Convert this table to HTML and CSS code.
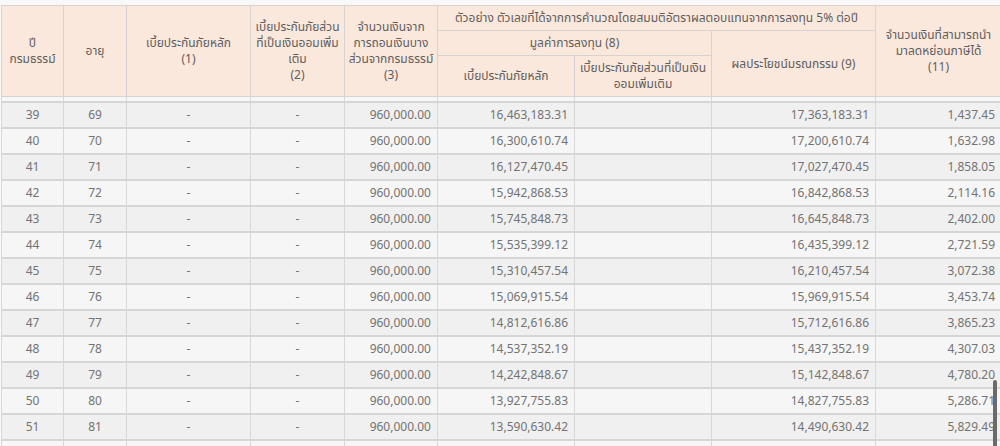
FILE: index.html
```html
<!DOCTYPE html>
<html lang="th">
<head>
<meta charset="utf-8">
<link rel="stylesheet" href="styles.css">
</head>
<body>
<div class="wrap">
<table class="tbl">
<colgroup>
<col class="c1"><col class="c2"><col class="c3"><col class="c4"><col class="c5"><col class="c6"><col class="c7"><col class="c8"><col class="c9">
</colgroup>
<thead>
<tr class="h1">
<th rowspan="3">ปี<br>กรมธรรม์</th>
<th rowspan="3">อายุ</th>
<th rowspan="3">เบี้ยประกันภัยหลัก<br>(1)</th>
<th rowspan="3">เบี้ยประกันภัยส่วน<br>ที่เป็นเงินออมเพิ่ม<br>เติม<br>(2)</th>
<th rowspan="3">จำนวนเงินจาก<br>การถอนเงินบาง<br>ส่วนจากกรมธรรม์<br>(3)</th>
<th colspan="3">ตัวอย่าง ตัวเลขที่ได้จากการคำนวณโดยสมมติอัตราผลตอบแทนจากการลงทุน 5% ต่อปี</th>
<th rowspan="3">จำนวนเงินที่สามารถนำ<br>มาลดหย่อนภาษีได้<br>(11)</th>
</tr>
<tr class="h2">
<th colspan="2">มูลค่าการลงทุน (8)</th>
<th rowspan="2">ผลประโยชน์มรณกรรม (9)</th>
</tr>
<tr class="h3">
<th>เบี้ยประกันภัยหลัก</th>
<th>เบี้ยประกันภัยส่วนที่เป็นเงิน<br>ออมเพิ่มเติม</th>
</tr>
<tr class="gap"><td></td><td></td><td></td><td></td><td></td><td></td><td></td><td></td><td></td></tr>
</thead>
<tbody>
<tr><td class="ct">39</td><td class="ct">69</td><td class="ct">-</td><td class="ct">-</td><td class="rt">960,000.00</td><td class="rt">16,463,183.31</td><td></td><td class="rt">17,363,183.31</td><td class="rt">1,437.45</td></tr>
<tr><td class="ct">40</td><td class="ct">70</td><td class="ct">-</td><td class="ct">-</td><td class="rt">960,000.00</td><td class="rt">16,300,610.74</td><td></td><td class="rt">17,200,610.74</td><td class="rt">1,632.98</td></tr>
<tr><td class="ct">41</td><td class="ct">71</td><td class="ct">-</td><td class="ct">-</td><td class="rt">960,000.00</td><td class="rt">16,127,470.45</td><td></td><td class="rt">17,027,470.45</td><td class="rt">1,858.05</td></tr>
<tr><td class="ct">42</td><td class="ct">72</td><td class="ct">-</td><td class="ct">-</td><td class="rt">960,000.00</td><td class="rt">15,942,868.53</td><td></td><td class="rt">16,842,868.53</td><td class="rt">2,114.16</td></tr>
<tr><td class="ct">43</td><td class="ct">73</td><td class="ct">-</td><td class="ct">-</td><td class="rt">960,000.00</td><td class="rt">15,745,848.73</td><td></td><td class="rt">16,645,848.73</td><td class="rt">2,402.00</td></tr>
<tr><td class="ct">44</td><td class="ct">74</td><td class="ct">-</td><td class="ct">-</td><td class="rt">960,000.00</td><td class="rt">15,535,399.12</td><td></td><td class="rt">16,435,399.12</td><td class="rt">2,721.59</td></tr>
<tr><td class="ct">45</td><td class="ct">75</td><td class="ct">-</td><td class="ct">-</td><td class="rt">960,000.00</td><td class="rt">15,310,457.54</td><td></td><td class="rt">16,210,457.54</td><td class="rt">3,072.38</td></tr>
<tr><td class="ct">46</td><td class="ct">76</td><td class="ct">-</td><td class="ct">-</td><td class="rt">960,000.00</td><td class="rt">15,069,915.54</td><td></td><td class="rt">15,969,915.54</td><td class="rt">3,453.74</td></tr>
<tr><td class="ct">47</td><td class="ct">77</td><td class="ct">-</td><td class="ct">-</td><td class="rt">960,000.00</td><td class="rt">14,812,616.86</td><td></td><td class="rt">15,712,616.86</td><td class="rt">3,865.23</td></tr>
<tr><td class="ct">48</td><td class="ct">78</td><td class="ct">-</td><td class="ct">-</td><td class="rt">960,000.00</td><td class="rt">14,537,352.19</td><td></td><td class="rt">15,437,352.19</td><td class="rt">4,307.03</td></tr>
<tr><td class="ct">49</td><td class="ct">79</td><td class="ct">-</td><td class="ct">-</td><td class="rt">960,000.00</td><td class="rt">14,242,848.67</td><td></td><td class="rt">15,142,848.67</td><td class="rt">4,780.20</td></tr>
<tr><td class="ct">50</td><td class="ct">80</td><td class="ct">-</td><td class="ct">-</td><td class="rt">960,000.00</td><td class="rt">13,927,755.83</td><td></td><td class="rt">14,827,755.83</td><td class="rt">5,286.71</td></tr>
<tr><td class="ct">51</td><td class="ct">81</td><td class="ct">-</td><td class="ct">-</td><td class="rt">960,000.00</td><td class="rt">13,590,630.42</td><td></td><td class="rt">14,490,630.42</td><td class="rt">5,829.49</td></tr>
<tr><td></td><td></td><td></td><td></td><td></td><td></td><td></td><td></td><td></td></tr>
</tbody>
</table>
<div class="scroll-thumb"></div>
</div>
</body>
</html>
```
FILE: styles.css
```css
html, body {
  margin: 0;
  padding: 0;
  background: #f9f9f9;
  overflow: hidden;
  height: 446px;
}
.wrap {
  position: relative;
  height: 446px;
  overflow: hidden;
  padding: 5px 0 0 1px;
  box-sizing: border-box;
}
.tbl {
  border-collapse: collapse;
  table-layout: fixed;
  width: 1000px;
  font-family: Tahoma, "Noto Sans Thai", "Noto Sans", "DejaVu Sans", sans-serif;
  font-size: 12px;
  color: #737373;
}
.c1 { width: 62px; }
.c2 { width: 63px; }
.c3 { width: 124px; }
.c4 { width: 94px; }
.c5 { width: 93px; }
.c6 { width: 137px; }
.c7 { width: 137px; }
.c8 { width: 164px; }
.c9 { width: 126px; }
th {
  background: #fbe8dc;
  border: 1px solid #d8d2d0;
  font-weight: normal;
  color: #5e5e5e;
  line-height: 16px;
  padding: 0 3px;
  text-align: center;
  vertical-align: middle;
}
.h1 th { height: 24px; }
.h2 th { height: 24px; }
.h3 th { height: 40px; }
.gap td {
  height: 4px;
  padding: 0;
  background: #f7f7f7;
  border: 1px solid #d8d8d8;
  border-bottom: 2px solid #d6d6d6;
}
tbody td {
  height: 24px;
  padding: 0 6px;
  border: 1px solid #d8d8d8;
  border-bottom: 2px solid #d6d6d6;
  background: #f0f0f0;
  white-space: nowrap;
}
tbody tr:nth-child(even) td {
  background: #f6f6f6;
}
.ct { text-align: center; }
.rt { text-align: right; }
.scroll-thumb {
  position: absolute;
  left: 993px;
  top: 380px;
  width: 4px;
  height: 80px;
  border-radius: 2px;
  background: #6a6a6a;
}
```
